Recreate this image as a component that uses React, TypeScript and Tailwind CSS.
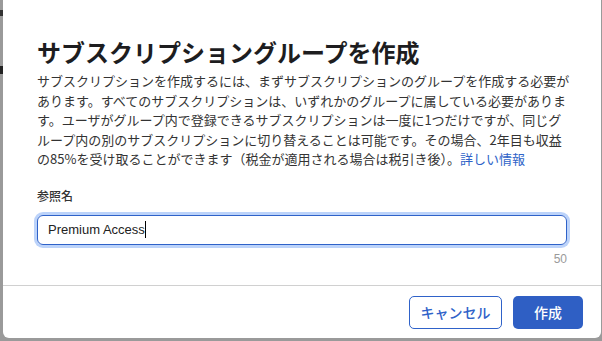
import React from "react";

const jp = { fontFamily: '"Noto Sans CJK JP", "Noto Sans", sans-serif' };

export default function App() {
  return (
    <div className="w-[602px] h-[341px] bg-[#9a9a9a] overflow-hidden relative" style={jp}>
      <div className="absolute left-0 top-[10px] w-[3px] h-[6px] bg-[#333]" />
      <div className="absolute left-0 top-[66px] w-[3px] h-[8px] bg-[#222]" />
      <div className="ml-[3px] w-[598px] h-[338px] bg-white rounded-b-[6px] flex flex-col">
        <div className="px-[34px] pt-[36px] flex flex-col">
          <h1 className="text-[24px] leading-[32px] font-bold text-[#1d1d1f] whitespace-nowrap">
            サブスクリプショングループを作成
          </h1>
          <p className="mt-[3px] text-[13px] leading-[19.5px] text-[#333] whitespace-nowrap">
            サブスクリプションを作成するには、まずサブスクリプションのグループを作成する必要が
            <br />
            あります。すべてのサブスクリプションは、いずれかのグループに属している必要がありま
            <br />
            す。ユーザがグループ内で登録できるサブスクリプションは一度に1つだけですが、同じグ
            <br />
            ループ内の別のサブスクリプションに切り替えることは可能です。その場合、2年目も収益
            <br />
            の85%を受け取ることができます（税金が適用される場合は税引き後）。
            <span className="text-[#2e63c8]">詳しい情報</span>
          </p>
          <label className="mt-[19px] text-[12px] leading-[16px] font-medium text-[#333]">参照名</label>
          <div className="mt-[11px] h-[30px] rounded-[6px] border border-[#2f62c9] ring-[3px] ring-[#bcd3fa] flex items-center px-[10px]">
            <span
              className="text-[13px] text-[#222] leading-[16px]"
              style={{ fontFamily: '"Liberation Sans", Arial, sans-serif' }}
            >
              Premium Access
            </span>
            <span className="w-[1.5px] h-[17px] bg-black" />
          </div>
          <div
            className="mt-[6px] self-end text-[12px] leading-[16px] text-[#9a9a9a]"
            style={{ fontFamily: '"Liberation Sans", Arial, sans-serif' }}
          >
            50
          </div>
        </div>
        <div className="mt-auto border-t border-[#d0d0d0] h-[53px] flex items-start justify-end gap-[11px] pr-[18px] pt-[10px]">
          <button className="w-[93px] h-[33px] rounded-[5px] border border-[#2f62c9] text-[#2f62c9] text-[14px] font-medium bg-white">
            キャンセル
          </button>
          <button className="w-[70px] h-[33px] rounded-[5px] bg-[#2f5fc4] text-white text-[14px] font-medium">
            作成
          </button>
        </div>
      </div>
    </div>
  );
}
